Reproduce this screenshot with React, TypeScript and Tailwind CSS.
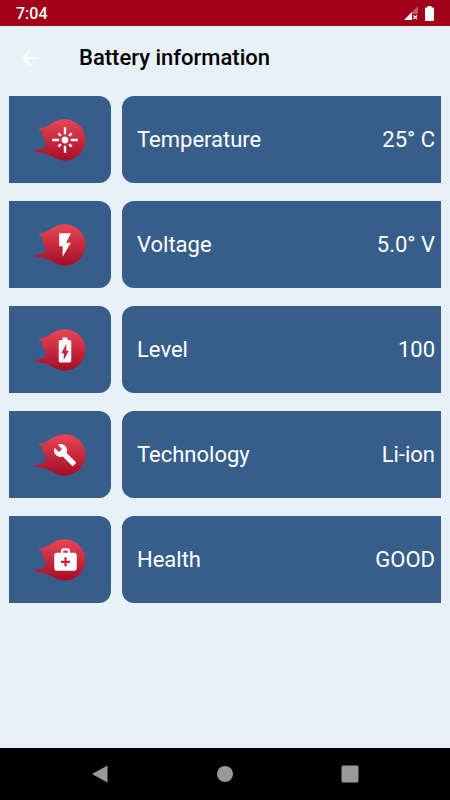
import type { ReactNode } from "react";
import { MdArrowBack, MdBatteryChargingFull, MdBuild, MdFlare, MdFlashOn, MdMedicalServices } from "react-icons/md";

type Row = { label: string; value: string; icon: ReactNode };

const rows: Row[] = [
  { label: "Temperature", value: "25° C", icon: <MdFlare size={28} /> },
  { label: "Voltage", value: "5.0° V", icon: <MdFlashOn size={28} /> },
  { label: "Level", value: "100", icon: <MdBatteryChargingFull size={30} /> },
  { label: "Technology", value: "Li-ion", icon: <MdBuild size={24} /> },
  { label: "Health", value: "GOOD", icon: <MdMedicalServices size={27} /> },
];

function Comet({ children }: { children: ReactNode }) {
  return (
    <div className="grid h-[42px] w-[52px] text-white">
      <svg viewBox="0 0 52 42" className="col-start-1 row-start-1 h-full w-full" aria-hidden="true">
        <defs>
          <linearGradient id="comet" x1="0" y1="0" x2="0" y2="1">
            <stop offset="0" stopColor="#ea4657" />
            <stop offset="1" stopColor="#a50d25" />
          </linearGradient>
        </defs>
        <path
          fill="url(#comet)"
          d="M31 0.2A20.7 20.7 0 1 1 20 38.600C16.500 36 13 34.600 9 33.900C5 33.200 1.500 33.400 0.200 32.600C0 31.600 1 31 2.500 30.700C5 30 9.500 29.600 10.700 28C12 26 11.800 23 10.800 21C9.800 19.200 8 17.500 7.800 16C7.800 15 9.300 14.500 9 13.300C8.500 12.300 5.500 12 5 10.600C4.800 9.400 6.500 9.400 8 9C12 8.200 14 6.800 17 4.800C21 2 26 0.200 31 0.200Z"
        />
      </svg>
      <span className="col-start-1 row-start-1 flex items-center justify-center pl-[10px]">{children}</span>
    </div>
  );
}

export default function App() {
  return (
    <div className="flex min-h-screen flex-col bg-[#e8f1f8] font-['Roboto',sans-serif]">
      <div className="flex h-[26px] items-center justify-between bg-[#a00018] px-4 text-white">
        <span className="pt-0.5 text-[16px] leading-5 font-medium">7:04</span>
        <span className="flex items-center gap-[7px]">
          <svg viewBox="0 0 14 14" className="h-3.5 w-3.5" aria-hidden="true">
            <path d="M14 0V8H8V6Z" fill="#fff" fillOpacity="0.35" />
            <path d="M0 14L8 6V14Z" fill="#fff" />
            <path d="M9.500 9.500L13 13M13 9.500L9.500 13" stroke="#fff" strokeWidth="1.300" />
          </svg>
          <svg viewBox="0 0 9 15" className="h-[15px] w-[9px]" fill="#fff" aria-hidden="true">
            <path d="M2.500 0H6.500V1.500H8.300Q9 1.500 9 2.200V14.300Q9 15 8.300 15H0.700Q0 15 0 14.300V2.200Q0 1.500 0.700 1.500H2.500Z" />
          </svg>
        </span>
      </div>
      <header className="flex h-[63px] items-center gap-9 pl-[17px]">
        <button type="button" aria-label="Back" className="text-white">
          <MdArrowBack size={26} />
        </button>
        <h1 className="text-[22px] leading-7 font-medium text-black">Battery information</h1>
      </header>
      <main className="flex-1 px-[9px] pt-[7px]">
        <dl className="flex flex-col gap-[18px] text-[22px] leading-7 text-white">
          {rows.map((row) => (
            <div key={row.label} className="flex h-[87px]">
              <dt className="flex flex-1 gap-[11px]">
                <span className="flex w-[102px] shrink-0 items-center justify-center rounded-r-xl bg-[#375d8b]">
                  <Comet>{row.icon}</Comet>
                </span>
                <span className="flex flex-1 items-center rounded-l-xl bg-[#375d8b] pl-[15px]">
                  {row.label}
                </span>
              </dt>
              <dd className="flex items-center bg-[#375d8b] pr-1.5">{row.value}</dd>
            </div>
          ))}
        </dl>
      </main>
      <nav className="flex h-[52px] items-center justify-around bg-black px-[37px] text-[#999]">
        <button type="button" aria-label="Back">
          <svg viewBox="0 0 18 18" className="h-[18px] w-[18px]" fill="currentColor">
            <path d="M16.500 0.500V17.500L1 9Z" />
          </svg>
        </button>
        <button type="button" aria-label="Home">
          <svg viewBox="0 0 18 18" className="h-[18px] w-[18px]" fill="currentColor">
            <circle cx="9" cy="9" r="8" />
          </svg>
        </button>
        <button type="button" aria-label="Recent apps">
          <svg viewBox="0 0 18 18" className="h-[18px] w-[18px]" fill="currentColor">
            <rect x="0.500" y="0.500" width="17" height="17" rx="1.500" />
          </svg>
        </button>
      </nav>
    </div>
  );
}
